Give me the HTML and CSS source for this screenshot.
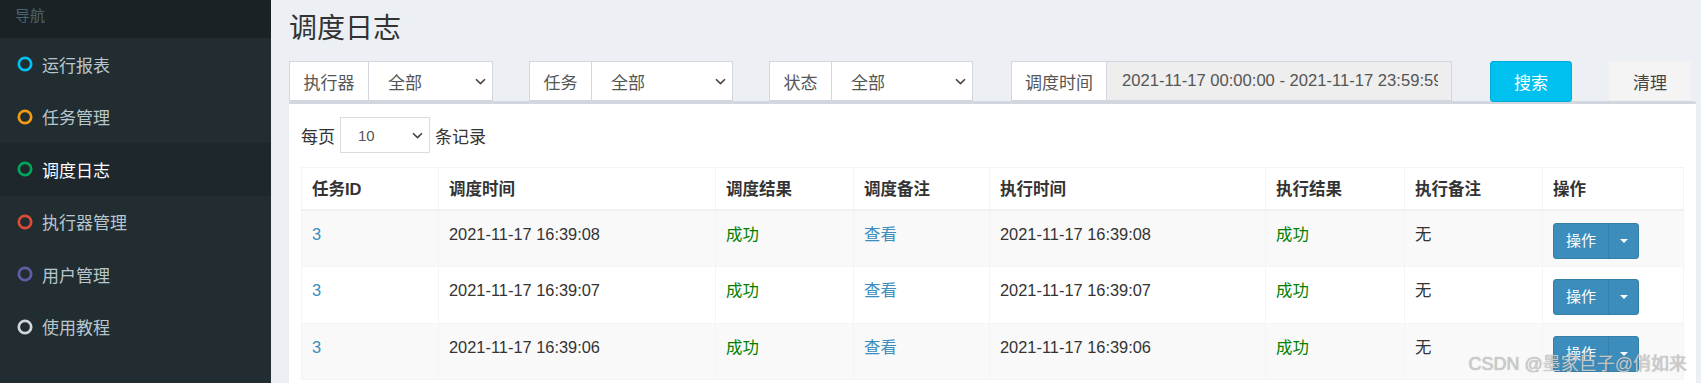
FILE: index.html
```html
<!DOCTYPE html>
<html lang="zh-CN">
<head>
<meta charset="utf-8">
<title>调度日志</title>
<link rel="stylesheet" href="styles.css">
</head>
<body>
<div class="app">
  <aside class="sidebar">
    <div class="nav-header">导航</div>
    <ul class="menu">
      <li class="item"><svg class="dot" viewBox="0 0 16 16"><circle cx="8" cy="8" r="6.2" stroke="#00c0ef"/></svg><span>运行报表</span></li>
      <li class="item"><svg class="dot" viewBox="0 0 16 16"><circle cx="8" cy="8" r="6.2" stroke="#f39c12"/></svg><span>任务管理</span></li>
      <li class="item active"><svg class="dot" viewBox="0 0 16 16"><circle cx="8" cy="8" r="6.2" stroke="#00a65a"/></svg><span>调度日志</span></li>
      <li class="item"><svg class="dot" viewBox="0 0 16 16"><circle cx="8" cy="8" r="6.2" stroke="#dd4b39"/></svg><span>执行器管理</span></li>
      <li class="item"><svg class="dot" viewBox="0 0 16 16"><circle cx="8" cy="8" r="6.2" stroke="#605ca8"/></svg><span>用户管理</span></li>
      <li class="item"><svg class="dot" viewBox="0 0 16 16"><circle cx="8" cy="8" r="6.2" stroke="#d2d6de"/></svg><span>使用教程</span></li>
    </ul>
  </aside>
  <main class="content">
    <h1 class="title">调度日志</h1>
    <div class="filters">
      <div class="igroup"><span class="addon w-exec">执行器</span><div class="sel"><span>全部</span><svg class="chev" viewBox="0 0 11 7"><path d="M1 1.2 L5.5 5.6 L10 1.2"/></svg></div></div>
      <div class="igroup"><span class="addon w-task">任务</span><div class="sel"><span>全部</span><svg class="chev" viewBox="0 0 11 7"><path d="M1 1.2 L5.5 5.6 L10 1.2"/></svg></div></div>
      <div class="igroup"><span class="addon w-task">状态</span><div class="sel"><span>全部</span><svg class="chev" viewBox="0 0 11 7"><path d="M1 1.2 L5.5 5.6 L10 1.2"/></svg></div></div>
      <div class="igroup"><span class="addon w-time">调度时间</span><div class="ro-input"><span class="ro-text">2021-11-17 00:00:00 - 2021-11-17 23:59:59</span></div></div>
      <button class="btn btn-search">搜索</button>
      <button class="btn btn-clear">清理</button>
    </div>
    <div class="box">
      <div class="length">
        <span>每页</span>
        <div class="sel sel-sm"><span>10</span><svg class="chev" viewBox="0 0 11 7"><path d="M1 1.2 L5.5 5.6 L10 1.2"/></svg></div>
        <span>条记录</span>
      </div>
      <table class="grid">
        <colgroup>
          <col class="c1"><col class="c2"><col class="c3"><col class="c4"><col class="c5"><col class="c6"><col class="c7"><col class="c8">
        </colgroup>
        <thead>
          <tr><th>任务ID</th><th>调度时间</th><th>调度结果</th><th>调度备注</th><th>执行时间</th><th>执行结果</th><th>执行备注</th><th>操作</th></tr>
        </thead>
        <tbody>
          <tr>
            <td><a class="link">3</a></td><td>2021-11-17 16:39:08</td><td class="ok">成功</td><td><a class="link">查看</a></td><td>2021-11-17 16:39:08</td><td class="ok">成功</td><td>无</td>
            <td><div class="opbtn"><span class="op-main">操作</span><span class="op-caret"><svg viewBox="0 0 8 4"><path d="M0 0 H8 L4 4 Z"/></svg></span></div></td>
          </tr>
          <tr>
            <td><a class="link">3</a></td><td>2021-11-17 16:39:07</td><td class="ok">成功</td><td><a class="link">查看</a></td><td>2021-11-17 16:39:07</td><td class="ok">成功</td><td>无</td>
            <td><div class="opbtn"><span class="op-main">操作</span><span class="op-caret"><svg viewBox="0 0 8 4"><path d="M0 0 H8 L4 4 Z"/></svg></span></div></td>
          </tr>
          <tr>
            <td><a class="link">3</a></td><td>2021-11-17 16:39:06</td><td class="ok">成功</td><td><a class="link">查看</a></td><td>2021-11-17 16:39:06</td><td class="ok">成功</td><td>无</td>
            <td><div class="opbtn"><span class="op-main">操作</span><span class="op-caret"><svg viewBox="0 0 8 4"><path d="M0 0 H8 L4 4 Z"/></svg></span></div></td>
          </tr>
        </tbody>
      </table>
    </div>
  </main>
  <div class="watermark">CSDN @墨家巨子@俏如来</div>
</div>
</body>
</html>
```
FILE: styles.css
```css
* { box-sizing: border-box; }
html, body { margin: 0; padding: 0; }
body {
  width: 1701px;
  height: 383px;
  overflow: hidden;
  font-family: "Liberation Sans", "Noto Sans CJK SC", sans-serif;
  color: #333;
  background: #ecf0f5;
}
.app {
  position: relative;
  display: flex;
  height: 383px;
}
.sidebar {
  width: 271px;
  flex: 0 0 271px;
  background: #222d32;
  height: 383px;
}
.nav-header {
  height: 38px;
  background: #1a2226;
  color: #4b646f;
  font-size: 15px;
  line-height: 32px;
  padding-left: 15px;
}
.menu { list-style: none; margin: 0; padding: 0; }
.item {
  height: 52.5px;
  display: flex;
  align-items: center;
  padding-left: 17px;
  color: #b8c7ce;
  font-size: 17px;
}
.item.active { background: #1e282c; color: #fff; }
.dot { width: 16px; height: 16px; margin-right: 9px; flex: 0 0 16px; }
.dot circle { fill: none; stroke-width: 2.7; }

.content {
  flex: 1;
  padding-left: 18px;
  min-width: 0;
}
.title {
  margin: 0;
  padding-top: 14px;
  font-size: 28px;
  font-weight: 400;
  line-height: 30px;
  color: #333;
}
.filters {
  margin-top: 17px;
  display: grid;
  grid-template-columns: 204px 204px 204px 443px 84px 84px;
  column-gap: 36px;
  height: 40px;
}
.filters > :nth-child(4) { margin-left: 2px; }
.filters > :nth-child(5) { margin-left: 2px; }
.igroup {
  display: flex;
  height: 40px;
  font-size: 17px;
}
.addon {
  display: flex;
  align-items: center;
  justify-content: center;
  background: #fff;
  border: 1px solid #d2d6de;
  color: #555;
}
.w-exec { width: 80px; flex: 0 0 80px; }
.w-task { width: 63px; flex: 0 0 63px; }
.w-time { width: 96px; flex: 0 0 96px; }
.sel {
  flex: 1;
  display: flex;
  align-items: center;
  justify-content: space-between;
  background: #fff;
  border: 1px solid #d2d6de;
  border-left: 0;
  padding: 0 6px 0 19px;
  color: #555;
}
.chev { width: 11px; height: 7px; }
.chev path { fill: none; stroke: #444; stroke-width: 1.6; }
.ro-input {
  flex: 1;
  display: flex;
  align-items: center;
  background: #eee;
  border: 1px solid #d2d6de;
  border-left: 0;
  padding: 0 13px 0 15px;
  color: #555;
  min-width: 0;
}
.ro-text {
  display: block;
  white-space: nowrap;
  overflow: hidden;
  font-size: 16.6px;
  min-width: 0;
}
.btn {
  font-family: inherit;
  font-size: 17px;
  height: 41px;
  border-radius: 3px;
  padding: 0;
  cursor: pointer;
}
.btn-search { background: #00c0ef; border: 1px solid #00acd6; color: #fff; }
.btn-clear { background: #f4f4f4; border: 1px solid #f0f0f0; color: #444; height: 40px; }

.box {
  width: 1407px;
  height: 300px;
  background: #fff;
  border-top: 3px solid #d2d6de;
  border-radius: 3px 3px 0 0;
  box-shadow: 0 1px 1px rgba(0,0,0,0.1);
  padding: 13px 12px 0 12px;
}
.length {
  display: flex;
  align-items: center;
  height: 36px;
  font-size: 17px;
  color: #333;
}
.sel-sm {
  flex: 0 0 90px;
  height: 36px;
  border: 1px solid #dcdcdc;
  margin: 0 5px 0 5px;
  padding: 0 6px 0 17px;
  font-size: 15px;
}
.grid {
  margin-top: 14px;
  width: 1382px;
  table-layout: fixed;
  border-collapse: collapse;
  border: 1px solid #f4f4f4;
  font-size: 16.4px;
}
.c1 { width: 137px; } .c2 { width: 277px; } .c3 { width: 138px; } .c4 { width: 136px; }
.c5 { width: 276px; } .c6 { width: 139px; } .c7 { width: 138px; } .c8 { width: 141px; }
.grid th, .grid td {
  border: 1px solid #f4f4f4;
  text-align: left;
  vertical-align: top;
  padding-left: 10px;
  padding-right: 10px;
  line-height: 20px;
}
.grid th {
  font-weight: 700;
  font-size: 16.5px;
  padding-top: 11px;
  padding-bottom: 10px;
  border-bottom: 2px solid #f0f0f0;
}
.grid td {
  padding-top: 13px;
  padding-bottom: 7px;
  height: 56.5px;
}
.grid tbody tr:nth-child(odd) { background: #f9f9f9; }
.link { color: #3c8dbc; }
.ok { color: #008000; }
.opbtn {
  display: inline-flex;
  height: 36px;
  margin-top: -1px;
  border-radius: 3px;
  background: #3c8dbc;
  border: 1px solid #367fa9;
  color: #fff;
  font-size: 15px;
  overflow: hidden;
}
.op-main { width: 54px; display: flex; align-items: center; justify-content: center; }
.op-caret {
  width: 30px;
  display: flex;
  align-items: center;
  justify-content: center;
  border-left: 1px solid #367fa9;
}
.op-caret svg { width: 8px; height: 4px; fill: #fff; }
.watermark {
  position: absolute;
  right: 14px;
  bottom: 8px;
  font-size: 18px;
  color: rgba(210, 210, 210, 0.9);
  text-shadow: 0 0 1px rgba(110,110,110,0.7);
  white-space: nowrap;
}
```
